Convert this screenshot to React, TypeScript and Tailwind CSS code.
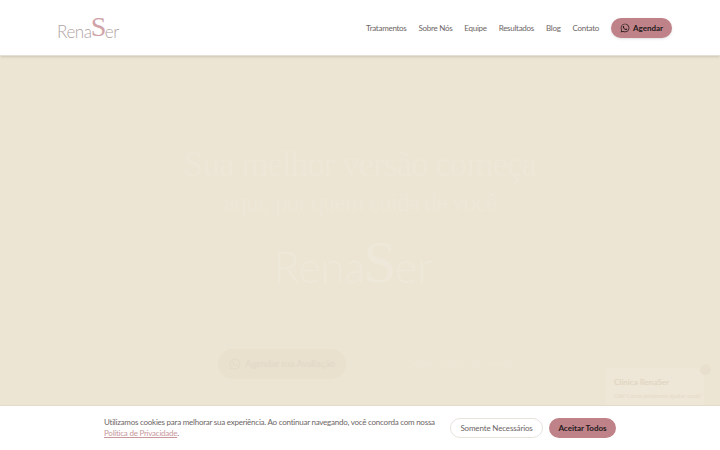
import { FaWhatsapp } from "react-icons/fa";

function Logo() {
  return (
    <div className="flex items-end font-['Lato',sans-serif] font-light text-[#b0a3a3] text-[17px] leading-none h-[24px] tracking-[-0.4px]">
      <span>Rena</span>
      <span className="font-['Liberation_Serif',serif] text-[#cfa3a8] text-[28px] leading-[27px] -mx-[1px]">S</span>
      <span>er</span>
    </div>
  );
}

export default function App() {
  return (
    <div className="relative w-[720px] h-[450px] overflow-hidden bg-[#ece5d3] font-['Lato',sans-serif]">
      <header className="h-[56px] bg-white border-b border-[#e5e0d6] shadow-sm flex items-center justify-between pl-[57px] pr-[48px]">
        <Logo />
        <nav className="flex items-center gap-[12px] text-[#6d6565] text-[8px] tracking-[-0.28px]">
          <span>Tratamentos</span>
          <span>Sobre Nós</span>
          <span>Equipe</span>
          <span>Resultados</span>
          <span>Blog</span>
          <span>Contato</span>
          <button className="flex items-center gap-[3px] h-[20px] w-[61px] justify-center rounded-full bg-[#bf8288] text-[#231a1c] font-bold text-[8px] shadow-sm tracking-normal">
            <FaWhatsapp className="w-[10px] h-[10px]" />
            Agendar
          </button>
        </nav>
      </header>

      <main className="flex flex-col items-center pt-[91px]">
        <h1 className="font-['Liberation_Serif',serif] text-[#eee7d8] text-[35px] leading-[35px] text-center tracking-[-1px]">
          Sua melhor versão começa
          <br />
          <span className="text-[25px] tracking-[-0.8px]">aqui, por quem cuida de você</span>
        </h1>
        <div className="mt-[18px] mr-[14px] flex items-end font-['Lato',sans-serif] font-light text-[#eee8da] text-[43px] leading-none h-[50px]">
          <span>Rena</span>
          <span className="font-['Liberation_Serif',serif] text-[60px] leading-[52px] -mx-[2px]">S</span>
          <span>er</span>
        </div>
        <div className="mt-[61px] flex items-center gap-[60px] self-start ml-[218px]">
          <button className="flex items-center gap-[4px] h-[30px] w-[128px] justify-center rounded-full bg-[#e9e0ce] text-[#e3dac8] text-[9px] font-bold">
            <FaWhatsapp className="w-[12px] h-[12px]" />
            Agendar sua Avaliação
          </button>
          <span className="text-[#eee7d8] text-[8.5px]">Conheça nossos tratamentos</span>
        </div>
      </main>

      <aside className="absolute left-[606px] top-[368px] w-[98px] h-[40px] bg-[#eee6d6] rounded-[4px] px-[8px] pt-[8px]">
        <p className="text-[#e2d6c3] text-[8px] font-bold">Clínica RenaSer</p>
        <p className="text-[#e6dbc9] text-[6px] mt-[3px] whitespace-nowrap">Olá! Como podemos ajudar você?</p>
      </aside>
      <div className="absolute left-[700px] top-[364px] w-[11px] h-[11px] rounded-full bg-[#e8e0cd]" />

      <div className="absolute left-0 right-0 top-[405px] h-[45px] bg-white border-t border-[#e3dccd] flex items-center pl-[104px] pr-[104px] justify-between">
        <div className="text-[#6d6565] text-[8px] leading-[11px] tracking-[-0.24px]">
          <p className="whitespace-nowrap">Utilizamos cookies para melhorar sua experiência. Ao continuar navegando, você concorda com nossa</p>
          <p>
            <a className="text-[#c8989d] underline">Política de Privacidade</a>.
          </p>
        </div>
        <div className="flex items-center gap-[6px]">
          <button className="h-[20px] w-[93px] rounded-full border border-[#e7e3dc] bg-white text-[#6d6565] text-[8px] tracking-[-0.15px]">
            Somente Necessários
          </button>
          <button className="h-[20px] w-[67px] rounded-full bg-[#bf8288] text-[#231a1c] text-[8px] font-bold">
            Aceitar Todos
          </button>
        </div>
      </div>
    </div>
  );
}
